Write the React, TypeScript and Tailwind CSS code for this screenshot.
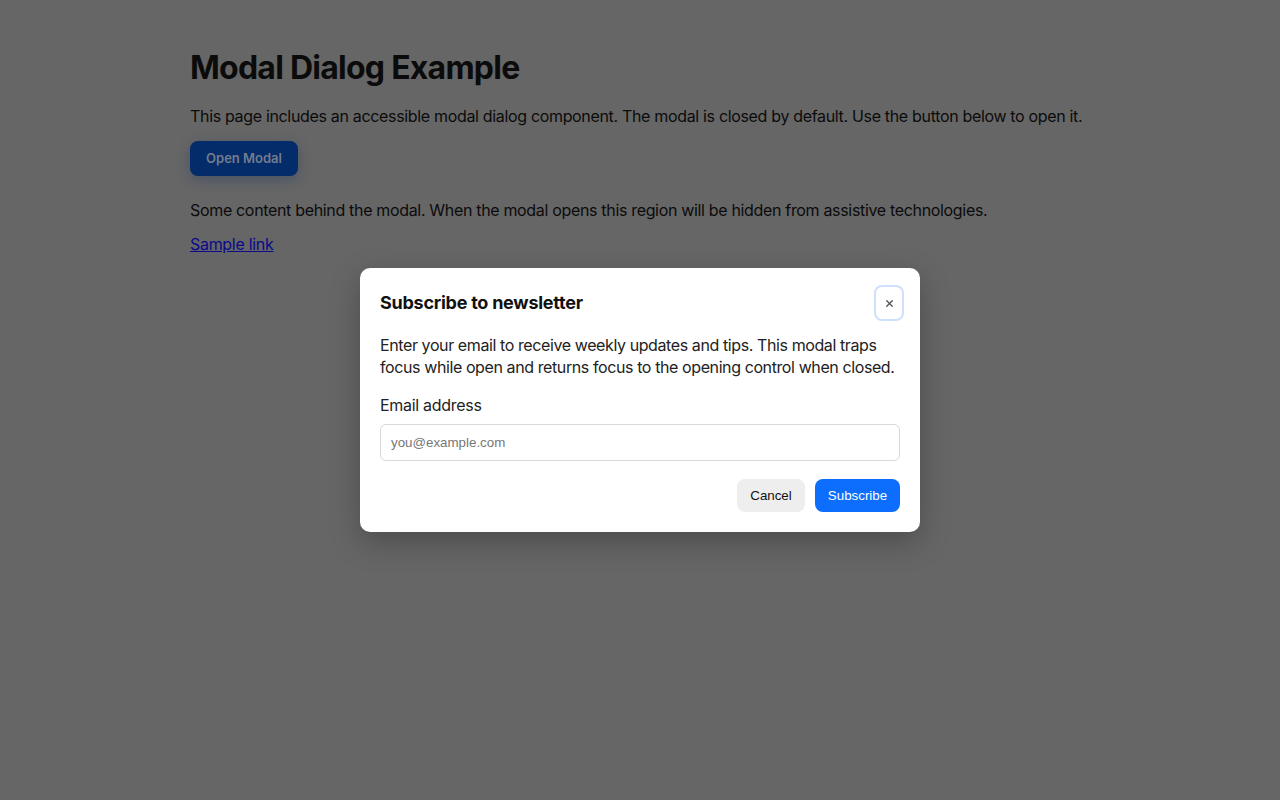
import { X } from 'lucide-react';

// Seite mit geöffnetem Modal — der Hintergrund ist abgedunkelt.

export default function App() {
  return (
    <div className="relative min-h-[800px] bg-[#666666] font-['Inter',sans-serif] text-[#0b0b0b]">
      <main className="mx-auto max-w-[900px] pt-[48px]" aria-hidden="true">
        <h1 className="text-[32px] font-bold leading-[40px] tracking-[-0.75px]">Modal Dialog Example</h1>
        <p className="mt-[16px] text-[16px] leading-[24px] tracking-[-0.33px]">
          This page includes an accessible modal dialog component. The modal is closed by default. Use the button below to open it.
        </p>
        <button className="mt-[13px] h-[35px] w-[108px] rounded-[8px] bg-[#042b6a] text-[13px] font-semibold text-[#737d8d] shadow-[0_4px_14px_rgba(5,40,100,0.3)]">
          Open Modal
        </button>
        <p className="mt-[22px] text-[16px] leading-[24px] tracking-[-0.33px]">
          Some content behind the modal. When the modal opens this region will be hidden from assistive technologies.
        </p>
        <a href="#" className="mt-[10px] inline-block text-[16px] leading-[24px] tracking-[-0.3px] text-[#0a0a8a] underline">Sample link</a>
      </main>

      <div className="absolute left-[360px] top-[268px] w-[560px] rounded-[10px] bg-white px-[20px] pb-[20px] pt-[17px] shadow-[0_10px_30px_rgba(0,0,0,0.25)]" role="dialog" aria-modal="true">
        <div className="flex items-center justify-between">
          <h2 className="text-[18px] font-bold leading-[34px] tracking-[-0.25px] text-[#111]">Subscribe to newsletter</h2>
          <button aria-label="Close" className="-mr-[4px] flex h-[36px] w-[30px] items-center justify-center rounded-[8px] border-2 border-[#cfe0fb] text-[#555]">
            <X size={11} strokeWidth={3} />
          </button>
        </div>
        <p className="mt-[13px] text-[16px] leading-[22px] tracking-[-0.4px] text-[#222]">
          Enter your email to receive weekly updates and tips. This modal traps focus while open and returns focus to the opening control when closed.
        </p>
        <label className="mt-[16px] block text-[16px] leading-[22px] tracking-[-0.3px] text-[#222]">Email address</label>
        <input
          type="email"
          placeholder="you@example.com"
          className="mt-[8px] block h-[37px] w-full rounded-[6px] border border-[#d9d9d9] px-[10px] font-['Liberation_Sans',Arial,sans-serif] text-[13.33px] placeholder:text-[#777] outline-none"
        />
        <div className="mt-[18px] flex justify-end gap-[10px] font-['Liberation_Sans',Arial,sans-serif] text-[13.33px]">
          <button className="h-[33px] w-[68px] rounded-[8px] bg-[#eeeeee] text-[#111]">Cancel</button>
          <button className="h-[33px] w-[85px] rounded-[8px] bg-[#0d6efd] text-white">Subscribe</button>
        </div>
      </div>
    </div>
  );
}
